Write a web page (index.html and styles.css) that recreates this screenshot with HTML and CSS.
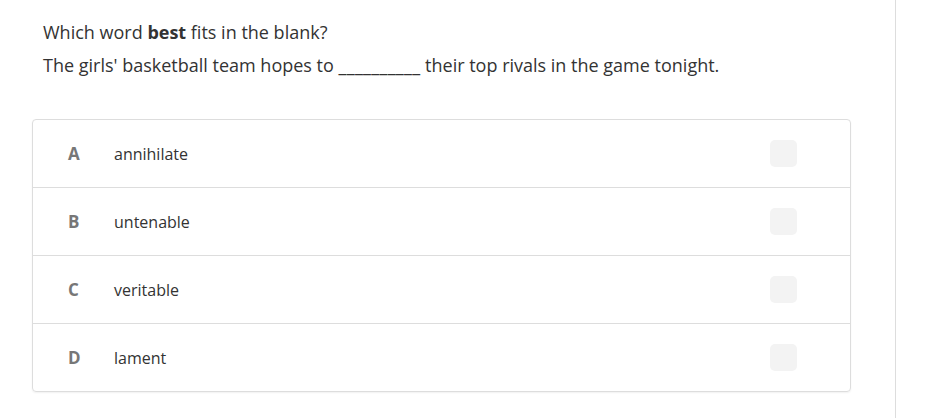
FILE: index.html
```html
<!DOCTYPE html>
<html>
<head>
<meta charset="utf-8">
<link rel="stylesheet" href="styles.css">
</head>
<body>
<div class="page">
  <main class="main">
    <div class="question">
      <p class="prompt">Which word <b>best</b> fits in the blank?</p>
      <p class="stem">The girls' basketball team hopes to <span class="blank">__________</span> their top rivals in the game tonight.</p>
    </div>
    <div class="choices">
      <div class="choice"><span class="letter">A</span><span class="text">annihilate</span><span class="box"></span></div>
      <div class="choice"><span class="letter">B</span><span class="text">untenable</span><span class="box"></span></div>
      <div class="choice"><span class="letter">C</span><span class="text">veritable</span><span class="box"></span></div>
      <div class="choice"><span class="letter">D</span><span class="text">lament</span><span class="box"></span></div>
    </div>
  </main>
  <aside class="side"></aside>
</div>
</body>
</html>
```
FILE: styles.css
```css
html, body { margin: 0; padding: 0; background: #fff; }
body { font-family: "Open Sans", "Liberation Sans", sans-serif; color: #333; }
.page { display: flex; height: 418px; }
.main { width: 896px; border-right: 1px solid #ddd; box-sizing: border-box; padding: 16px 0 0 32px; }
.side { flex: 1; }
.question { padding-left: 11px; }
.prompt, .stem { margin: 0; font-size: 18px; line-height: 33px; }
.prompt b { font-weight: 700; }
.blank { letter-spacing: 0.3px; }
.choices { margin-top: 37px; width: 819px; border: 1px solid #ddd; border-radius: 4px; box-sizing: border-box; box-shadow: 0 1px 2px rgba(0,0,0,0.06); }
.choice { display: flex; align-items: center; height: 68px; border-top: 1px solid #ddd; box-sizing: border-box; }
.choice:first-child { border-top: none; height: 67px; }
.letter { width: 46px; margin-left: 35px; font-weight: 700; font-size: 17px; color: #777; }
.text { flex: 1; font-size: 16px; color: #333; }
.box { width: 27px; height: 27px; border-radius: 5px; background: #f3f3f3; margin-right: 53px; }
```
